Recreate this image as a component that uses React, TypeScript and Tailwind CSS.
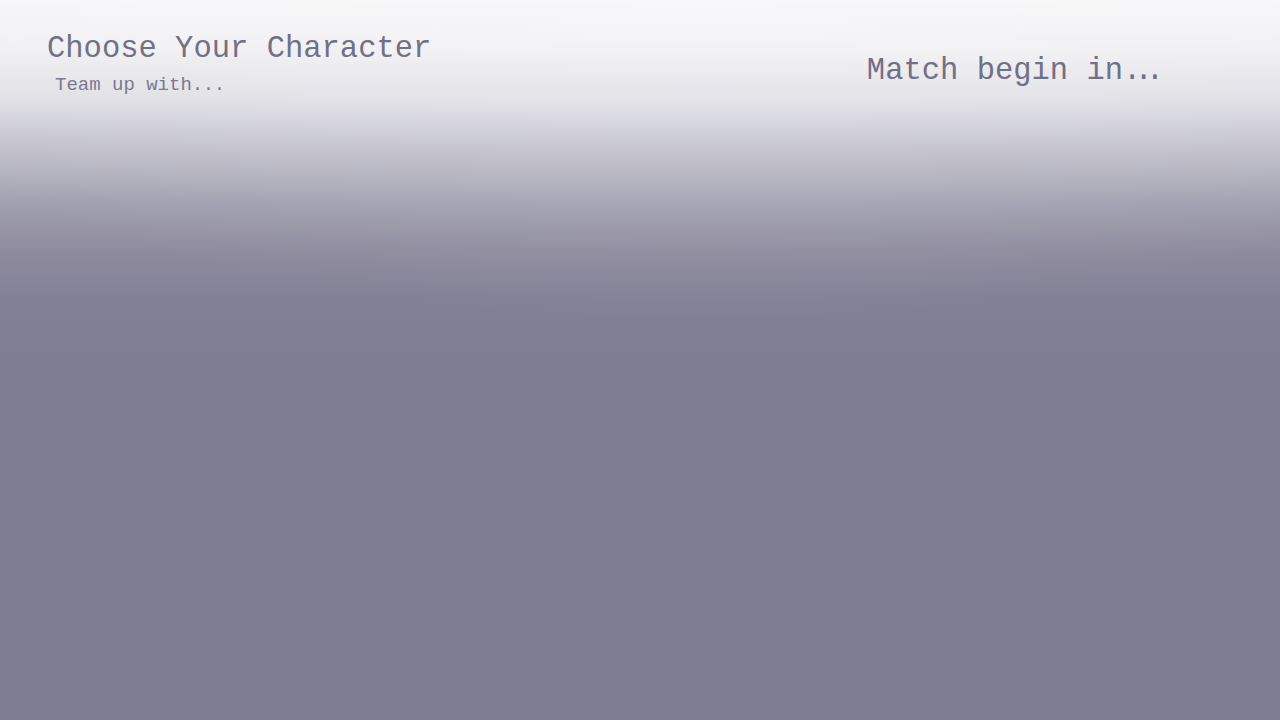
export default function App() {
  return (
    <div className="relative min-h-[720px] w-full bg-[linear-gradient(to_bottom,#f7f7f9_0%,#f0f0f3_7%,#dfdfe5_14%,#c0bfca_21%,#a2a1b0_28%,#8d8b9d_35%,#828094_42%,#7f7d91_50%,#7f7d91_100%)] font-['Liberation_Mono',monospace] text-[#727086]">
      {/* soft light from the top centre */}
      <div className="pointer-events-none absolute inset-0 bg-[radial-gradient(ellipse_70%_45%_at_55%_0%,rgba(255,255,255,0.18),rgba(255,255,255,0))]" />
      <header className="relative flex items-start justify-between pl-[47px] pr-[123px] pt-[31px]">
        <div className="flex flex-col">
          <h1 className="text-[30.5px] leading-[36px] font-normal">Choose Your Character</h1>
          <p className="pl-[8px] pt-[6px] text-[19px] leading-[24px] text-[#7b798e]">
            Team up with<span className="tracking-[-0.5px]">...</span>
          </p>
        </div>
        <div className="pt-[22px]">
          <h2 className="text-[30.5px] leading-[36px] font-normal">
            Match begin in<span className="tracking-[-7px]">...</span>
          </h2>
        </div>
      </header>
    </div>
  );
}
